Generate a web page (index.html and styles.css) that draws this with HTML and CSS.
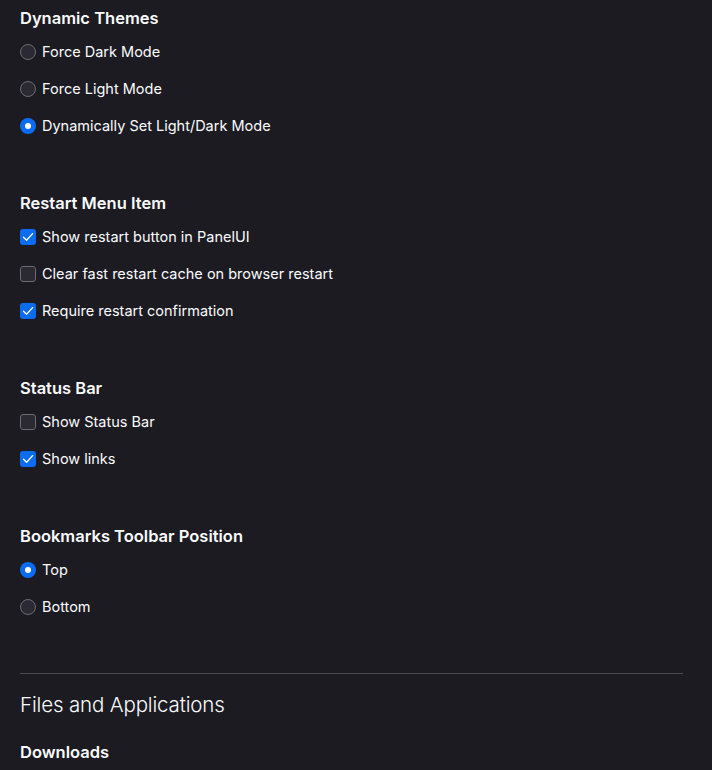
FILE: index.html
```html
<!DOCTYPE html>
<html>
<head>
<meta charset="utf-8">
<link rel="stylesheet" href="styles.css">
</head>
<body>
<div class="page">
  <section class="group">
    <h3 class="heading">Dynamic Themes</h3>
    <div class="option"><span class="radio"></span><span class="label">Force Dark Mode</span></div>
    <div class="option"><span class="radio"></span><span class="label">Force Light Mode</span></div>
    <div class="option"><span class="radio on"></span><span class="label">Dynamically Set Light/Dark Mode</span></div>
  </section>
  <section class="group">
    <h3 class="heading">Restart Menu Item</h3>
    <div class="option"><span class="check on"><svg viewBox="0 0 16 16"><path d="M3.5 8.2 L6.6 11.2 L12.6 4.6" /></svg></span><span class="label">Show restart button in PanelUI</span></div>
    <div class="option"><span class="check"></span><span class="label">Clear fast restart cache on browser restart</span></div>
    <div class="option"><span class="check on"><svg viewBox="0 0 16 16"><path d="M3.5 8.2 L6.6 11.2 L12.6 4.6" /></svg></span><span class="label">Require restart confirmation</span></div>
  </section>
  <section class="group">
    <h3 class="heading">Status Bar</h3>
    <div class="option"><span class="check"></span><span class="label">Show Status Bar</span></div>
    <div class="option"><span class="check on"><svg viewBox="0 0 16 16"><path d="M3.5 8.2 L6.6 11.2 L12.6 4.6" /></svg></span><span class="label">Show links</span></div>
  </section>
  <section class="group">
    <h3 class="heading">Bookmarks Toolbar Position</h3>
    <div class="option"><span class="radio on"></span><span class="label">Top</span></div>
    <div class="option"><span class="radio"></span><span class="label">Bottom</span></div>
  </section>
  <hr class="divider">
  <h2 class="title">Files and Applications</h2>
  <h3 class="heading">Downloads</h3>
</div>
</body>
</html>
```
FILE: styles.css
```css
html, body {
  margin: 0;
  padding: 0;
  background: #1c1b22;
  color: #fbfbfe;
  font-family: Inter, "Noto Sans", sans-serif;
}
.page {
  padding: 7px 0 0 20px;
  width: 663px;
}
.group {
  margin-bottom: 48px;
}
.heading {
  margin: 0 0 4px 0;
  font-size: 16.5px;
  font-weight: 600;
  line-height: 22px;
}
.option {
  display: flex;
  align-items: center;
  height: 37px;
  gap: 6px;
}
.label {
  font-size: 14.5px;
  line-height: 20px;
}
.radio {
  width: 16px;
  height: 16px;
  box-sizing: border-box;
  border-radius: 50%;
  border: 1px solid #6b6b73;
  background: #2b2a33;
  flex: none;
  display: flex;
  align-items: center;
  justify-content: center;
}
.radio.on {
  border: none;
  background: #0b6cf1;
}
.radio.on::after {
  content: "";
  width: 6px;
  height: 6px;
  border-radius: 50%;
  background: #ffffff;
}
.check {
  width: 16px;
  height: 16px;
  box-sizing: border-box;
  border-radius: 3px;
  border: 1px solid #6b6b73;
  background: #2b2a33;
  flex: none;
  display: flex;
}
.check.on {
  border: none;
  background: #0b6cf1;
}
.check svg {
  width: 16px;
  height: 16px;
}
.check svg path {
  fill: none;
  stroke: #ffffff;
  stroke-width: 1.3;
  stroke-linecap: round;
  stroke-linejoin: round;
}
.divider {
  margin: 0 0 16px 0;
  border: none;
  border-top: 1px solid #4a4a52;
  height: 0;
}
.title {
  margin: 0 0 21px 0;
  font-size: 20.5px;
  font-weight: 300;
  line-height: 30px;
  letter-spacing: -0.15px;
}
```
